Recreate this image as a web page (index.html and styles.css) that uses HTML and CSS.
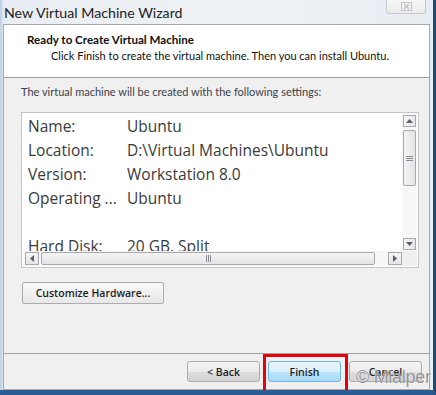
FILE: index.html
```html
<!DOCTYPE html>
<html lang="en">
<head>
  <meta charset="UTF-8">
  <title>New Virtual Machine Wizard</title>
  <link rel="stylesheet" href="styles.css">
</head>
<body>
  <div class="window">
    <div class="titlebar">
      <span class="title">New Virtual Machine Wizard</span>
      <span class="close-btn">
        <svg width="11" height="9" viewBox="0 0 11 9">
          <rect x="0.5" y="0.5" width="10" height="8" fill="none" stroke="#c4c4c4"/>
          <path d="M3 2 L8 7 M8 2 L3 7" stroke="#c4c4c4" stroke-width="1.5"/>
        </svg>
      </span>
    </div>

    <div class="dialog">
      <div class="header">
        <div class="header-title">Ready to Create Virtual Machine</div>
        <div class="header-sub">Click Finish to create the virtual machine. Then you can install Ubuntu.</div>
      </div>

      <div class="content">
        <p class="intro">The virtual machine will be created with the following settings:</p>

        <div class="listbox">
          <div class="list-view">
            <div class="row"><span class="key">Name:</span><span>Ubuntu</span></div>
            <div class="row"><span class="key">Location:</span><span>D:\Virtual Machines\Ubuntu</span></div>
            <div class="row"><span class="key">Version:</span><span>Workstation 8.0</span></div>
            <div class="row"><span class="key">Operating ...</span><span>Ubuntu</span></div>
            <div class="row"></div>
            <div class="row"><span class="key">Hard Disk:</span><span>20 GB, Split</span></div>
          </div>

          <div class="vscroll">
            <div class="sb-btn">
              <svg width="7" height="4" viewBox="0 0 7 4"><path d="M0 4 L3.5 0 L7 4 Z" fill="#5c5c70"/></svg>
            </div>
            <div class="vthumb">
              <svg width="7" height="5" viewBox="0 0 7 5"><path d="M0 0.5 H7 M0 2.5 H7 M0 4.5 H7" stroke="#8a8a96"/></svg>
            </div>
            <div class="vtrack"></div>
            <div class="sb-btn">
              <svg width="7" height="4" viewBox="0 0 7 4"><path d="M0 0 L3.5 4 L7 0 Z" fill="#5c5c70"/></svg>
            </div>
          </div>

          <div class="hscroll">
            <div class="sb-btn wide">
              <svg width="4" height="7" viewBox="0 0 4 7"><path d="M4 0 L0 3.5 L4 7 Z" fill="#5c5c70"/></svg>
            </div>
            <div class="hthumb">
              <svg width="5" height="7" viewBox="0 0 5 7"><path d="M0.5 0 V7 M2.5 0 V7 M4.5 0 V7" stroke="#8a8a96"/></svg>
            </div>
            <div class="htrack"></div>
            <div class="sb-btn wide">
              <svg width="4" height="7" viewBox="0 0 4 7"><path d="M0 0 L4 3.5 L0 7 Z" fill="#5c5c70"/></svg>
            </div>
          </div>

          <div class="corner"></div>
        </div>

        <button class="btn customize">Customize Hardware...</button>
      </div>

      <div class="footer">
        <button class="btn">&lt; Back</button>
        <span class="highlight"><button class="btn primary">Finish</button></span>
        <button class="btn">Cancel</button>
      </div>
    </div>

    <div class="watermark">&copy; Mialper</div>
  </div>
</body>
</html>
```

FILE: styles.css
```css
* {
  box-sizing: border-box;
}

body {
  margin: 0;
  font-family: Lato, "Open Sans", sans-serif;
  background-color: #1f4d7d;
}

.window {
  position: relative;
  width: 436px;
  height: 395px;
  overflow: hidden;
  background: linear-gradient(to right, #b9cde2 0px, #e9eef4 4px, #eef2f6 60%, #e7edf3 100%);
  border-right: 3px solid #1d4a79;
  border-bottom: 5px solid #2a5d94;
}

.titlebar {
  height: 24px;
  display: flex;
  justify-content: space-between;
  align-items: flex-start;
  padding-left: 4px;
  padding-right: 7px;
}

.title {
  font-size: 14.2px;
  line-height: 24px;
  color: #222;
  padding-top: 1px;
}

.close-btn {
  width: 40px;
  height: 14px;
  border: 1px solid #c9c9c9;
  border-top: none;
  border-radius: 0 0 4px 4px;
  background: linear-gradient(#f6f6f6, #ececec);
  display: flex;
  justify-content: center;
  align-items: center;
}

.dialog {
  margin-left: 3px;
  width: 427px;
  height: 366px;
  border: 1px solid #a9a9a9;
  display: flex;
  flex-direction: column;
  background-color: #f0f0f0;
}

.header {
  height: 53px;
  background-color: #ffffff;
  border-bottom: 1px solid #a0a0a0;
  padding: 7px 0 0 23px;
  font-size: 11px;
  color: #111;
}

.header-title {
  font-size: 11.6px;
  font-weight: 700;
  line-height: 16px;
}

.header-sub {
  line-height: 16px;
  padding-left: 24px;
}

.content {
  flex: 1;
  padding: 6px 10px 0 17px;
  border-bottom: 1px solid #a0a0a0;
}

.intro {
  margin: 0 0 12px 0;
  font-size: 11px;
  line-height: 16px;
  color: #3b3f4a;
}

.listbox {
  width: 398px;
  height: 156px;
  background-color: #ffffff;
  border: 1px solid #c6c6c6;
  display: grid;
  grid-template-columns: 1fr 15px;
  grid-template-rows: 1fr 15px;
  padding: 0 1px 1px 1px;
}

.list-view {
  overflow: hidden;
  padding: 1px 0 0 5px;
  font-family: "Open Sans", sans-serif;
  font-size: 15.5px;
  color: #3a3a3a;
}

.row {
  display: flex;
  height: 24px;
  line-height: 24px;
  white-space: nowrap;
}

.key {
  width: 99px;
}

.vscroll {
  display: flex;
  flex-direction: column;
  padding: 2px 1px 1px 1px;
  background-color: #f7f7f7;
}

.hscroll {
  display: flex;
  padding: 1px 0 1px 2px;
  background-color: #f7f7f7;
}

.corner {
  background-color: #efefef;
}

.sb-btn {
  height: 12px;
  border: 1px solid #a8a8a8;
  background: linear-gradient(to right, #f6f6f6, #e6e6e6);
  display: flex;
  justify-content: center;
  align-items: center;
}

.sb-btn.wide {
  width: 14px;
  height: auto;
  background: linear-gradient(#f6f6f6, #e6e6e6);
}

.vthumb {
  height: 56px;
  margin-top: 3px;
  border: 1px solid #a8a8a8;
  border-radius: 2px;
  background: linear-gradient(to right, #f4f4f4, #e4e4e4);
  display: flex;
  justify-content: center;
  align-items: center;
}

.vtrack {
  flex: 1;
}

.hthumb {
  width: 334px;
  margin-left: 2px;
  border: 1px solid #a8a8a8;
  border-radius: 2px;
  background: linear-gradient(#f4f4f4, #e4e4e4);
  display: flex;
  justify-content: center;
  align-items: center;
}

.htrack {
  flex: 1;
}

.btn {
  font-family: "Open Sans", sans-serif;
  font-size: 10.5px;
  font-weight: 600;
  color: #1e1e1e;
  height: 21px;
  padding: 0;
  border: 1px solid #acacac;
  border-radius: 3px;
  background: linear-gradient(#f4f4f4 0%, #ebebeb 50%, #dddddd 51%, #d4d4d4 100%);
  cursor: pointer;
}

.customize {
  width: 142px;
  height: 22px;
  margin-top: 14px;
  margin-left: 1px;
  border-radius: 2px;
  background: linear-gradient(#f8f8f8, #e8e8e8);
}

.footer {
  height: 35px;
  display: flex;
  justify-content: flex-end;
  align-items: flex-start;
  gap: 8px;
  padding: 7px 7px 0 0;
}

.footer .btn {
  width: 73px;
}

.btn.primary {
  border-color: #6fb6e1;
  background: linear-gradient(#eaf6fd 0%, #d9f0fc 50%, #bee6fd 51%, #a7d9f5 100%);
}

.highlight {
  position: relative;
  display: flex;
}

.highlight::after {
  content: "";
  position: absolute;
  top: -7px;
  left: -5px;
  right: -7px;
  bottom: -11px;
  border: 3px solid #e8000b;
}

.watermark {
  position: absolute;
  left: 356px;
  top: 367px;
  font-family: "Liberation Sans", sans-serif;
  font-size: 18px;
  letter-spacing: -0.3px;
  color: rgba(120, 120, 120, 0.8);
  text-shadow: 0 0 1px #ffffff;
  white-space: nowrap;
}
```
